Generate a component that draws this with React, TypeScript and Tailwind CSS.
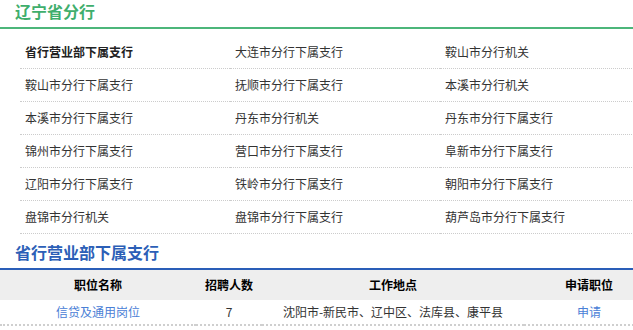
import React from "react";

const branches: string[] = [
	"省行营业部下属支行",
	"大连市分行下属支行",
	"鞍山市分行机关",
	"鞍山市分行下属支行",
	"抚顺市分行下属支行",
	"本溪市分行机关",
	"本溪市分行下属支行",
	"丹东市分行机关",
	"丹东市分行下属支行",
	"锦州市分行下属支行",
	"营口市分行下属支行",
	"阜新市分行下属支行",
	"辽阳市分行下属支行",
	"铁岭市分行下属支行",
	"朝阳市分行下属支行",
	"盘锦市分行机关",
	"盘锦市分行下属支行",
	"葫芦岛市分行下属支行",
];

const App: React.FC = () => {
	return (
		<div
			className="w-[633px] h-[330px] overflow-hidden bg-white text-[#333]"
			style={{ fontFamily: '"Noto Sans CJK SC", "Noto Sans", sans-serif' }}
		>
			{/* province header */}
			<div className="h-[29px] border-b-2 border-[#4cb67a] pl-[15px] pt-[2px]">
				<h2 className="text-[16px] leading-[18px] font-bold text-[#3fae6c]">
					辽宁省分行
				</h2>
			</div>

			<div className="ml-[20px] mt-[7px] grid grid-cols-[210px_210px_210px] w-[630px]">
				{branches.map((name, i) => (
					<div
						key={name}
						className={
							"h-[33px] pl-[5px] flex items-center border-b border-dotted border-[#cccccc] text-[12px] " +
							(i === 0 ? "font-bold text-[#222]" : "text-[#333]")
						}
					>
						{name}
					</div>
				))}
			</div>

			{/* sub-branch section */}
			<div className="h-[36px] border-b-2 border-[#2a5eb8] pl-[15px] flex items-center">
				<h3 className="text-[16px] leading-none font-bold text-[#2c5fb7] mt-[1px]">
					省行营业部下属支行
				</h3>
			</div>

			<table className="w-[654px] border-collapse text-[12px] table-fixed">
				<thead>
					<tr className="bg-[#eeeeee] h-[30px]">
						<th className="w-[196px] font-bold text-black">职位名称</th>
						<th className="w-[66px] font-bold text-black">招聘人数</th>
						<th className="w-[262px] font-bold text-black">工作地点</th>
						<th className="w-[130px] font-bold text-black">申请职位</th>
					</tr>
				</thead>
				<tbody>
					<tr className="h-[25px] border-b-2 border-dotted border-[#cfcfcf]">
						<td className="text-center">
							<a href="#" className="text-[#4a80d6]">
								信贷及通用岗位
							</a>
						</td>
						<td className="text-center">7</td>
						<td className="text-center whitespace-nowrap">沈阳市-新民市、辽中区、法库县、康平县</td>
						<td className="text-center">
							<a href="#" className="text-[#4a80d6]">
								申请
							</a>
						</td>
					</tr>
				</tbody>
			</table>
		</div>
	);
};

export default App;
